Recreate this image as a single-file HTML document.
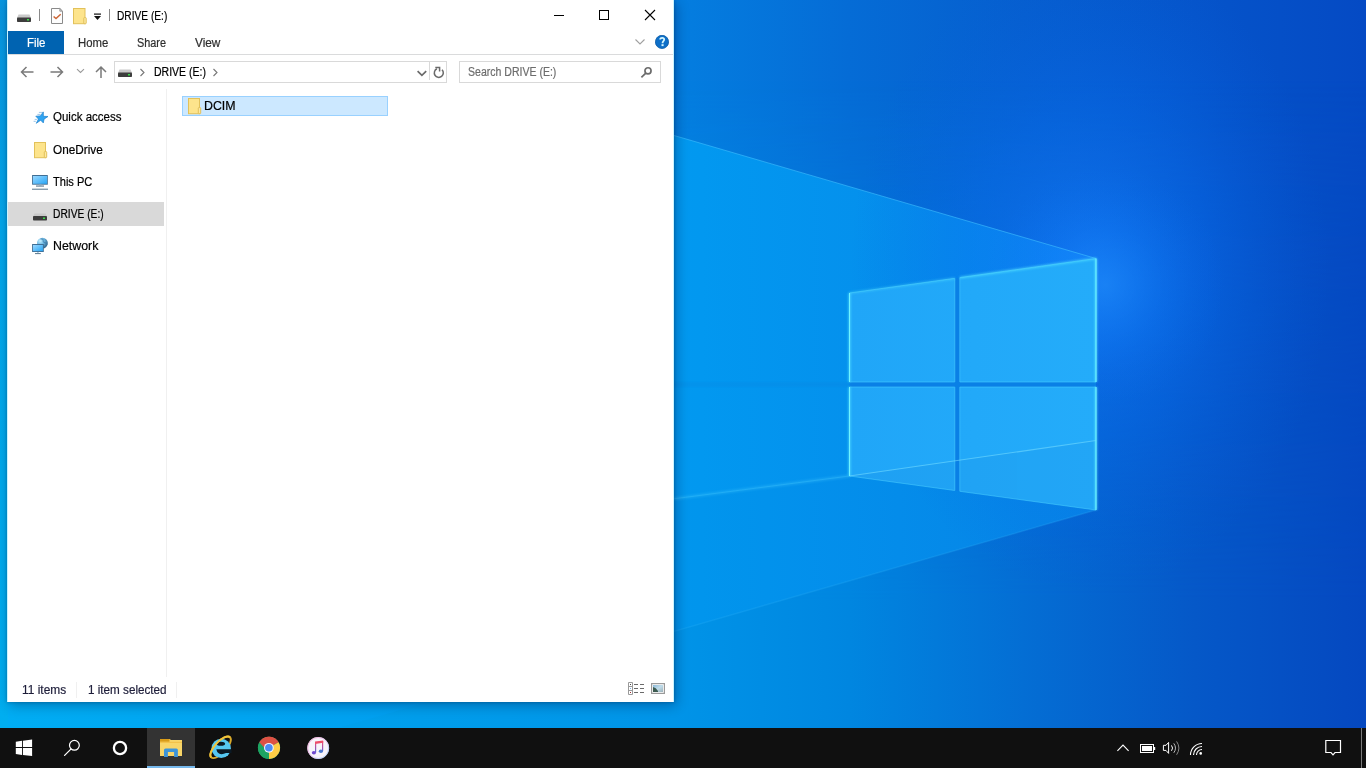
<!DOCTYPE html>
<html><head><meta charset="utf-8">
<style>
html,body{margin:0;padding:0;}
body{width:1366px;height:768px;overflow:hidden;position:relative;font-family:"Liberation Sans",sans-serif;background:#0a6fd8;}
.a{position:absolute;}
.t{position:absolute;font-size:12px;line-height:14px;white-space:pre;transform-origin:0 0;color:#000;-webkit-text-stroke:0.2px currentColor;}
#win{position:absolute;left:7px;top:0;width:667px;height:702px;background:#fff;box-shadow:2px 3px 12px rgba(0,0,40,0.32), 0 0 3px rgba(0,0,40,0.25);}
#tb{position:absolute;left:0;top:728px;width:1366px;height:40px;background:#101010;}
</style></head><body>
<!-- WALLPAPER -->
<svg class="a" style="left:0;top:0" width="1366" height="728" viewBox="0 0 1366 728">
  <defs>
    <linearGradient id="gt" gradientUnits="userSpaceOnUse" x1="0" y1="0" x2="1366" y2="0">
      <stop offset="0" stop-color="#0898e2"/>
      <stop offset="0.493" stop-color="#047ee0"/>
      <stop offset="0.622" stop-color="#056cd6"/>
      <stop offset="0.749" stop-color="#065ece"/>
      <stop offset="0.875" stop-color="#0554ca"/>
      <stop offset="1" stop-color="#054ac4"/>
    </linearGradient>
    <linearGradient id="gbt" gradientUnits="userSpaceOnUse" x1="0" y1="0" x2="1366" y2="0">
      <stop offset="0" stop-color="#00acf0"/>
      <stop offset="0.493" stop-color="#0094e8"/>
      <stop offset="0.622" stop-color="#0086e0"/>
      <stop offset="0.749" stop-color="#046ed4"/>
      <stop offset="0.875" stop-color="#0558c8"/>
      <stop offset="1" stop-color="#0548c0"/>
    </linearGradient>
    <linearGradient id="mv" gradientUnits="userSpaceOnUse" x1="0" y1="80" x2="0" y2="600">
      <stop offset="0" stop-color="#fff" stop-opacity="0"/>
      <stop offset="1" stop-color="#fff" stop-opacity="1"/>
    </linearGradient>
    <mask id="mk"><rect width="1366" height="728" fill="url(#mv)"/></mask>
    <linearGradient id="gb" gradientUnits="userSpaceOnUse" x1="0" y1="0" x2="1096" y2="0">
      <stop offset="0" stop-color="#00b2f6"/>
      <stop offset="0.64" stop-color="#0298f0"/>
      <stop offset="1" stop-color="#0886e8"/>
    </linearGradient>
    <radialGradient id="glow" gradientUnits="userSpaceOnUse" cx="1090" cy="270" r="240" gradientTransform="translate(1090 270) scale(1 1.35) translate(-1090 -270)">
      <stop offset="0" stop-color="#1a80ff" stop-opacity="0.6"/>
      <stop offset="0.5" stop-color="#0a70f4" stop-opacity="0.35"/>
      <stop offset="1" stop-color="#0660e0" stop-opacity="0"/>
    </radialGradient>
    <radialGradient id="glow2" gradientUnits="userSpaceOnUse" cx="1105" cy="285" r="120">
      <stop offset="0" stop-color="#2090ff" stop-opacity="0.55"/>
      <stop offset="0.5" stop-color="#1080ff" stop-opacity="0.22"/>
      <stop offset="1" stop-color="#0a70f0" stop-opacity="0"/>
    </radialGradient>
    <linearGradient id="gp" gradientUnits="userSpaceOnUse" x1="850" y1="0" x2="1096" y2="0">
      <stop offset="0" stop-color="#20a6f8"/>
      <stop offset="1" stop-color="#24acfa"/>
    </linearGradient>
    <filter id="bl" x="-20%" y="-20%" width="140%" height="140%"><feGaussianBlur stdDeviation="1.2"/></filter>
  </defs>
  <rect width="1366" height="728" fill="url(#gt)"/>
  <rect width="1366" height="728" fill="url(#gbt)" mask="url(#mk)"/>
  <polygon points="0,-61 1096,258.5 1096,510 0,825" fill="url(#gb)"/>
  <polygon points="0,586 849.5,476 1096,440 1096,510 0,825" fill="#0060c8" opacity="0.06"/>
  <rect width="1366" height="728" fill="url(#glow)"/>
  <linearGradient id="ls" x1="0" y1="0" x2="0" y2="1"><stop offset="0" stop-color="#0896e0"/><stop offset="0.3" stop-color="#02a6ea"/><stop offset="1" stop-color="#00aef0"/></linearGradient>
  <rect x="0" y="0" width="8" height="728" fill="url(#ls)"/>
  <rect x="900" y="100" width="400" height="400" fill="url(#glow2)"/>
  <line x1="0" y1="-61" x2="1096" y2="258.5" stroke="#40c0ff" stroke-width="1" opacity="0.6"/>
  <line x1="674" y1="498.8" x2="849.5" y2="476" stroke="#40c8ff" stroke-width="1" opacity="0.3"/>
  <line x1="674" y1="631.4" x2="1096" y2="510" stroke="#40c0ff" stroke-width="1.5" opacity="0.18"/>
  <rect x="600" y="382" width="250" height="5" fill="#0a70d0" opacity="0.12" filter="url(#bl)"/>
  <polygon points="849.5,293 1096,258.5 1096,510 849.5,476" fill="#0a80e6"/>
  <line x1="674" y1="498.8" x2="849.5" y2="476" stroke="#50d0ff" stroke-width="3" opacity="0.25" filter="url(#bl)"/>
  <g fill="url(#gp)">
    <polygon points="849.5,293 954.8,278.3 954.8,382 849.5,382"/>
    <polygon points="959.8,277.6 1096,258.5 1096,382 959.8,382"/>
    <polygon points="849.5,387 954.8,387 954.8,490.5 849.5,476"/>
    <polygon points="959.8,387 1096,387 1096,510 959.8,491.3"/>
  </g>
  <g fill="#0a60c0" opacity="0.07">
    <polygon points="849.5,476 954.8,461 954.8,490.5"/>
    <polygon points="959.8,460.3 1096,440.5 1096,510 959.8,491.3"/>
  </g>
  <g fill="none" stroke="#4ad0ff" stroke-width="1" opacity="0.55">
    <polygon points="849.5,293 954.8,278.3 954.8,382 849.5,382"/>
    <polygon points="959.8,277.6 1096,258.5 1096,382 959.8,382"/>
    <polygon points="849.5,387 954.8,387 954.8,490.5 849.5,476"/>
    <polygon points="959.8,387 1096,387 1096,510 959.8,491.3"/>
  </g>
  <g fill="none" stroke="#60f0ff" stroke-width="2.2" filter="url(#bl)" opacity="0.65">
    <polyline points="959.8,277.6 1096,258.5" opacity="0.8"/>
    <polyline points="849.5,293 954.8,278.3" opacity="0.5"/>
    <polyline points="849.5,382 849.5,293"/>
    <polyline points="849.5,476 849.5,387"/>
    <polyline points="1096,382 1096,258.5"/>
    <polyline points="1096,510 1096,387"/>
  </g>
  <g fill="none" stroke="#70f4ff" stroke-width="1">
    <polyline points="849.5,382 849.5,293"/>
    <polyline points="849.5,476 849.5,387"/>
    <polyline points="1096,382 1096,258.5"/>
    <polyline points="1096,510 1096,387"/>
  </g>
  <line x1="849.5" y1="476" x2="1096" y2="440.5" stroke="#7ae0ff" stroke-width="1.2" opacity="0.55"/>
</svg>

<!-- WINDOW -->
<div id="win"></div>
<div class="a" style="left:7px;top:0;width:1px;height:702px;background:#c8f4ff"></div>
<div class="a" style="left:673px;top:0;width:1px;height:702px;background:#c8f4ff"></div>
<!-- title bar icons -->
<svg class="a" style="left:16px;top:12px" width="16" height="12" viewBox="0 0 16 12">
  <path d="M2.5 2.5 L13.5 2.5 L15 6 L1 6 Z" fill="#c9c9c9"/>
  <rect x="1" y="5.5" width="14" height="4.5" rx="0.8" fill="#3d3d3d"/>
  <rect x="11" y="7" width="2" height="1.5" fill="#3ce04a"/>
</svg>
<div class="a" style="left:39px;top:9px;width:1px;height:12px;background:#8a8a8a"></div>
<svg class="a" style="left:50px;top:7px" width="15" height="18" viewBox="0 0 15 18">
  <path d="M1.5 1.5 H9.8 L12.5 4.2 V16.5 H1.5 Z" fill="#fdfdfd" stroke="#8a8a8a" stroke-width="1"/>
  <path d="M9.8 1.5 V4.2 H12.5 Z" fill="#d6d6d6" stroke="#8a8a8a" stroke-width="0.8"/>
  <path d="M3.6 9.5 L6 11.6 L10.7 7.2" fill="none" stroke="#cc6636" stroke-width="1.5"/>
</svg>
<svg class="a" style="left:72px;top:7px" width="16" height="18" viewBox="0 0 16 18">
  <rect x="1.5" y="1.5" width="11.5" height="15.2" fill="#fde48c" stroke="#e2c15a" stroke-width="1"/>
  <rect x="11.8" y="10.6" width="2.4" height="6.1" rx="0.6" fill="#fde9a2" stroke="#e2c15a" stroke-width="1"/>
</svg>
<svg class="a" style="left:93px;top:13px" width="9" height="8" viewBox="0 0 9 8">
  <rect x="1" y="0.5" width="7" height="1.2" fill="#111"/>
  <path d="M1 3 H8 L4.5 7 Z" fill="#111"/>
</svg>
<div class="a" style="left:109px;top:9px;width:1px;height:12px;background:#8a8a8a"></div>
<div class="t" style="left:116.8px;top:8.84px;color:#000;transform:scaleX(0.8473);">DRIVE (E:)</div>
<div class="a" style="left:554px;top:15px;width:10px;height:1px;background:#000"></div>
<div class="a" style="left:599px;top:10px;width:8px;height:8px;border:1px solid #000"></div>
<svg class="a" style="left:644px;top:9px" width="12" height="12" viewBox="0 0 12 12">
  <path d="M1 1 L11 11 M11 1 L1 11" stroke="#000" stroke-width="1.1"/>
</svg>
<!-- ribbon -->
<div class="a" style="left:8px;top:31px;width:56px;height:23px;background:#0063b1"></div>
<div class="a" style="left:8px;top:54px;width:665px;height:1px;background:#dadbdc"></div>
<svg class="a" style="left:634px;top:38px" width="12" height="8" viewBox="0 0 12 8">
  <path d="M1.5 1.5 L6 6 L10.5 1.5" fill="none" stroke="#a0a0a0" stroke-width="1.1"/>
</svg>
<svg class="a" style="left:655px;top:35px" width="14" height="14" viewBox="0 0 14 14">
  <circle cx="7" cy="6.9" r="6.6" fill="#0e6fc8" stroke="#0a5aa6" stroke-width="0.8"/>
  <path d="M5.2 4.5 C5.2 3.3 6.1 2.8 7.2 2.8 C8.4 2.8 9.2 3.5 9.2 4.6 C9.2 6 7.6 6.3 7.6 7.8 V8.3" fill="none" stroke="#d4f6ff" stroke-width="1.8"/>
  <rect x="6.5" y="9.2" width="2.1" height="1.9" fill="#d4f6ff"/>
</svg>
<div class="t" style="left:27.2px;top:35.84px;color:#fff;transform:scaleX(0.9565);">File</div>
<div class="t" style="left:78.2px;top:35.84px;color:#2e2e2e;transform:scaleX(0.9452);">Home</div>
<div class="t" style="left:137.4px;top:35.84px;color:#2e2e2e;transform:scaleX(0.9065);">Share</div>
<div class="t" style="left:195.4px;top:35.84px;color:#2e2e2e;transform:scaleX(0.9840);">View</div>
<svg class="a" style="left:19px;top:65px" width="16" height="14" viewBox="0 0 16 14">
  <path d="M14.5 7 H2.5 M7.5 2 L2.5 7 L7.5 12" fill="none" stroke="#7a7a7a" stroke-width="1.5"/>
</svg>
<svg class="a" style="left:49px;top:65px" width="16" height="14" viewBox="0 0 16 14">
  <path d="M1.5 7 H13.5 M8.5 2 L13.5 7 L8.5 12" fill="none" stroke="#7a7a7a" stroke-width="1.5"/>
</svg>
<svg class="a" style="left:76px;top:68px" width="9" height="6" viewBox="0 0 9 6">
  <path d="M1 1.2 L4.5 4.5 L8 1.2" fill="none" stroke="#9a9a9a" stroke-width="1.1"/>
</svg>
<svg class="a" style="left:94px;top:65px" width="14" height="14" viewBox="0 0 14 14">
  <path d="M7 13 V2 M2 7 L7 2 L12 7" fill="none" stroke="#7a7a7a" stroke-width="1.5"/>
</svg>
<div class="a" style="left:114px;top:61px;width:331px;height:20px;border:1px solid #d9d9d9"></div>
<div class="a" style="left:429px;top:62px;width:1px;height:18px;background:#d9d9d9"></div>
<svg class="a" style="left:117px;top:67px" width="16" height="12" viewBox="0 0 16 12">
  <path d="M2.5 2.5 L13.5 2.5 L15 6 L1 6 Z" fill="#c9c9c9"/>
  <rect x="1" y="5.5" width="14" height="4.5" rx="0.8" fill="#3d3d3d"/>
  <rect x="11" y="7" width="2" height="1.5" fill="#3ce04a"/>
</svg>
<svg class="a" style="left:139px;top:68px" width="7" height="9" viewBox="0 0 7 9">
  <path d="M1.5 1 L5 4.5 L1.5 8" fill="none" stroke="#777" stroke-width="1.1"/>
</svg>
<svg class="a" style="left:212px;top:68px" width="7" height="9" viewBox="0 0 7 9">
  <path d="M1.5 1 L5 4.5 L1.5 8" fill="none" stroke="#777" stroke-width="1.1"/>
</svg>
<svg class="a" style="left:416px;top:68px" width="12" height="10" viewBox="0 0 12 10">
  <path d="M1.6 3.2 L5.9 7.4 L10.2 3.2" fill="none" stroke="#6a6a6a" stroke-width="1.7"/>
</svg>
<svg class="a" style="left:432px;top:65px" width="14" height="14" viewBox="0 0 14 14">
  <path d="M10.0 4.7 A4.5 4.5 0 1 1 4.9 3.8" fill="none" stroke="#6a6a6a" stroke-width="1.5"/>
  <path d="M3.3 2.6 H7.6 V6.6" fill="none" stroke="#6a6a6a" stroke-width="1.5"/>
</svg>
<div class="a" style="left:459px;top:61px;width:200px;height:20px;border:1px solid #d9d9d9"></div>
<svg class="a" style="left:639px;top:66px" width="14" height="14" viewBox="0 0 14 14">
  <circle cx="9" cy="4.8" r="3.05" fill="none" stroke="#6c6c6c" stroke-width="1.7"/>
  <path d="M6.8 7.1 L2.4 11.4" stroke="#6c6c6c" stroke-width="1.7"/>
</svg>
<div class="t" style="left:153.6px;top:64.84px;color:#000;transform:scaleX(0.8750);">DRIVE (E:)</div>
<div class="t" style="left:467.6px;top:64.84px;color:#6d6d6d;transform:scaleX(0.8776);">Search DRIVE (E:)</div>
<div class="a" style="left:166px;top:89px;width:1px;height:588px;background:#f0f0f0"></div>
<div class="a" style="left:8px;top:202px;width:156px;height:24px;background:#d9d9d9"></div>
<svg class="a" style="left:32px;top:110px" width="18" height="16" viewBox="0 0 18 16">
  <path d="M11.30 1.90 L11.37 6.30 L16.00 6.50 L12.05 9.13 L11.30 12.90 L8.70 10.22 L4.30 13.30 L6.44 9.03 L3.80 6.20 L8.35 5.90 Z" fill="#2ea4f2" stroke="#1e80cc" stroke-width="0.7" stroke-linejoin="round"/>
  <path d="M6.9 2.4 H11 M5.4 4.4 H8.5 M2.7 9.4 H4.9 M1.6 11.3 H3.8" stroke="#4a98d8" stroke-width="0.8" opacity="0.7"/>
</svg>
<svg class="a" style="left:33px;top:141px" width="15" height="18" viewBox="0 0 15 18">
  <rect x="1.5" y="1.5" width="11" height="15.2" fill="#fde48c" stroke="#e2c15a" stroke-width="1"/>
  <rect x="11.3" y="10.6" width="2.4" height="6.1" rx="0.6" fill="#fde9a2" stroke="#e2c15a" stroke-width="1"/>
</svg>
<svg class="a" style="left:31px;top:174px" width="18" height="17" viewBox="0 0 18 17">
  <defs><linearGradient id="scr" x1="0" y1="0" x2="1" y2="1"><stop offset="0" stop-color="#9ad8ff"/><stop offset="1" stop-color="#28a6f6"/></linearGradient></defs>
  <rect x="1.1" y="1" width="15.7" height="9.7" fill="#3f6e94"/>
  <rect x="2" y="2" width="14" height="7.8" fill="url(#scr)"/>
  <rect x="8.3" y="10.7" width="2.2" height="0.9" fill="#a8c6dc"/>
  <rect x="5" y="11.5" width="8" height="1.1" fill="#5a788e"/>
  <rect x="1" y="14" width="16" height="0.8" fill="#d6e0e8"/>
  <rect x="1" y="14.8" width="16" height="1.1" fill="#7d94a6"/>
</svg>
<svg class="a" style="left:32px;top:212px" width="16" height="10" viewBox="0 0 16 10">
  <path d="M2.5 1.5 L13.5 1.5 L15 4.5 L1 4.5 Z" fill="#c9c9c9"/>
  <rect x="1" y="4" width="14" height="4.5" rx="0.8" fill="#3d3d3d"/>
  <rect x="11" y="5.5" width="2" height="1.5" fill="#3ce04a"/>
</svg>
<svg class="a" style="left:31px;top:236px" width="18" height="19" viewBox="0 0 18 19">
  <defs>
    <radialGradient id="glb" cx="0.3" cy="0.3" r="0.8"><stop offset="0" stop-color="#c8f0ff"/><stop offset="0.45" stop-color="#6cb8e4"/><stop offset="1" stop-color="#2a5a80"/></radialGradient>
  </defs>
  <circle cx="11.4" cy="7.1" r="5.4" fill="url(#glb)"/>
  <path d="M9.5 3 Q11.5 2.6 12.3 4 Q11.6 5.6 13.5 6.4 Q15.6 6.8 16.2 9" fill="none" stroke="#3d7aa8" stroke-width="1.1" opacity="0.7"/>
  <rect x="1.1" y="8" width="11.7" height="8" fill="#3f6e94"/>
  <rect x="2" y="9" width="9.9" height="6.1" fill="url(#scr)"/>
  <rect x="6" y="16" width="1.8" height="0.9" fill="#a8c6dc"/>
  <rect x="4" y="17.1" width="5.8" height="1" fill="#5a788e"/>
</svg>
<div class="t" style="left:53.3px;top:110.34px;color:#000;transform:scaleX(0.9602);">Quick access</div>
<div class="t" style="left:53.3px;top:143.2px;color:#000;transform:scaleX(0.9799);">OneDrive</div>
<div class="t" style="left:53.3px;top:174.84px;color:#000;transform:scaleX(0.9209);">This PC</div>
<div class="t" style="left:53.3px;top:206.84px;color:#000;transform:scaleX(0.8542);">DRIVE (E:)</div>
<div class="t" style="left:53.0px;top:239.04px;color:#000;transform:scaleX(1.0300);">Network</div>
<div class="a" style="left:182px;top:96px;width:204px;height:18px;background:#cce8ff;border:1px solid #99d1ff"></div>
<svg class="a" style="left:187px;top:97px" width="15" height="18" viewBox="0 0 15 18">
  <rect x="1.5" y="1.5" width="11" height="15.2" fill="#fde48c" stroke="#e2c15a" stroke-width="1"/>
  <rect x="11.3" y="10.6" width="2.4" height="6.1" rx="0.6" fill="#fde9a2" stroke="#e2c15a" stroke-width="1"/>
</svg>
<div class="t" style="left:203.6px;top:98.84px;color:#000;transform:scaleX(1.0300);">DCIM</div>
<div class="t" style="left:21.8px;top:682.84px;color:#1e1e3a;transform:scaleX(0.9931);">11 items</div>
<div class="t" style="left:87.8px;top:682.84px;color:#1e1e3a;transform:scaleX(0.9737);">1 item selected</div>
<div class="a" style="left:76px;top:682px;width:1px;height:16px;background:#f0f0f0"></div>
<div class="a" style="left:176px;top:682px;width:1px;height:16px;background:#f0f0f0"></div>
<svg class="a" style="left:628px;top:682px" width="17" height="14" viewBox="0 0 17 14">
  <path d="M0.5 0.5 H4.5 V12.5 H0.5 Z M0.5 4.5 H4.5 M0.5 8.5 H4.5" fill="#fff" stroke="#9a9a9a" stroke-width="1"/>
  <rect x="2" y="2" width="1" height="1" fill="#444"/>
  <rect x="2" y="6" width="1" height="1" fill="#7aaee0"/>
  <rect x="2" y="10" width="1" height="1" fill="#a03030"/>
  <path d="M6 2.5 H10 M12 2.5 H16 M6 6.5 H10 M12 6.5 H16 M6 10.5 H10 M12 10.5 H16" stroke="#6a6a6a" stroke-width="1.1"/>
</svg>
<svg class="a" style="left:651px;top:683px" width="14" height="11" viewBox="0 0 14 11">
  <defs><linearGradient id="ph" x1="0" y1="0" x2="1" y2="1"><stop offset="0" stop-color="#8ab8d8"/><stop offset="0.5" stop-color="#c0dcea"/><stop offset="1" stop-color="#9ab0b8"/></linearGradient></defs>
  <rect x="0.6" y="0.6" width="12.8" height="9.8" fill="#fff" stroke="#9a9a9a" stroke-width="1.2"/>
  <rect x="2" y="2" width="10" height="7" fill="url(#ph)"/>
  <path d="M2 4 Q5 4.5 7 8 L7 9 H2 Z" fill="#3c5a50"/>
</svg>
<!-- TASKBAR -->
<div id="tb"></div>
<svg class="a" style="left:0;top:728px" width="1366" height="40" viewBox="0 728 1366 40">
  <!-- start -->
  <g fill="#fff">
    <polygon points="15.8,741.7 22,740.8 22,746.9 15.8,746.9"/>
    <polygon points="22.9,740.7 32.1,739.6 32.1,746.9 22.9,746.9"/>
    <polygon points="15.8,748 22,748 22,755 15.8,754.1"/>
    <polygon points="22.9,748 32.1,748 32.1,756.1 22.9,755.1"/>
  </g>
  <!-- search -->
  <circle cx="74.4" cy="745.3" r="4.9" fill="none" stroke="#fff" stroke-width="1.2"/>
  <path d="M70.9 749.1 L64.6 755.4" stroke="#fff" stroke-width="1.3" stroke-linecap="round"/>
  <!-- cortana -->
  <circle cx="120" cy="748" r="6.1" fill="none" stroke="#fff" stroke-width="2.3"/>
  <!-- explorer active -->
  <rect x="147" y="728" width="48" height="40" fill="#333"/>
  <rect x="147" y="766" width="48" height="2" fill="#76b9ed"/>
  <path d="M160 739 H169.5 L171 740 H182 V756 H160 Z" fill="#f8d568"/>
  <rect x="160" y="739" width="9.5" height="2.8" fill="#d99c18"/>
  <rect x="160" y="741.8" width="22" height="1.2" fill="#f3c24a"/>
  <path d="M164 757 V750 Q164 748.4 165.6 748.4 H176.3 Q177.9 748.4 177.9 750 V757 H174.1 V751.9 H167.9 V757 Z" fill="#3d94d8"/>
  <!-- IE -->
  <g transform="rotate(-47 220.6 747.3)"><ellipse cx="220.6" cy="747.3" rx="13.8" ry="5.6" fill="none" stroke="#d9a92a" stroke-width="1.9"/></g>
  <circle cx="221.2" cy="748.4" r="9.7" fill="#56c8f2"/>
  <ellipse cx="220.8" cy="743.8" rx="4.3" ry="2" fill="#0b1a26"/>
  <path d="M216.3 749.3 H231.5 V753.1 H226 Q222 755 219 753.6 Q216.8 752.4 216.3 749.3 Z" fill="#0b1a26"/>
  <g transform="rotate(-47 220.6 747.3)"><path d="M206.8 747.3 A13.8 5.6 0 0 1 234.4 747.3" fill="none" stroke="#f0c43a" stroke-width="1.9"/></g>
  <!-- chrome -->
  <circle cx="269" cy="747.8" r="11.1" fill="#1da462"/>
  <path d="M269 747.8 L259.4 742.25 A11.1 11.1 0 0 1 278.6 742.25 Z" fill="#dd5144"/>
  <path d="M269 747.8 L278.6 742.25 A11.1 11.1 0 0 1 269 758.9 Z" fill="#ffcd46"/>
  <path d="M269 747.8 L269 758.9 A11.1 11.1 0 0 1 259.4 742.25 Z" fill="#1da462"/>
  <path d="M264.2 747.8 L259.4 742.25 A11.1 11.1 0 0 1 278.6 742.25 L269 742.25 Z" fill="#dd5144"/>
  <circle cx="268.9" cy="747.8" r="4.9" fill="#f0f4ff"/>
  <circle cx="268.9" cy="747.8" r="3.8" fill="#4c8bf5"/>
  <!-- itunes -->
  <defs>
    <linearGradient id="itn" x1="0" y1="0" x2="0" y2="1"><stop offset="0" stop-color="#f2506a"/><stop offset="0.6" stop-color="#a050b0"/><stop offset="1" stop-color="#4a70d8"/></linearGradient>
    <linearGradient id="itr" x1="0" y1="0" x2="1" y2="1"><stop offset="0" stop-color="#f0a0c8"/><stop offset="0.5" stop-color="#e8b8f0"/><stop offset="1" stop-color="#90d8ff"/></linearGradient>
  </defs>
  <circle cx="318.2" cy="748" r="10.9" fill="#f7f3fb"/>
  <circle cx="318.2" cy="748" r="10.5" fill="none" stroke="url(#itr)" stroke-width="0.9"/>
  <path d="M315.6 752.6 V742.5 M322.6 751 V741" fill="none" stroke="url(#itn)" stroke-width="1.2"/>
  <path d="M315 741.6 L323.2 740.4 V742.7 L315 743.9 Z" fill="#ee4e6c"/>
  <ellipse cx="313.9" cy="752.8" rx="2.1" ry="1.7" fill="#7048d0"/>
  <ellipse cx="320.9" cy="751.2" rx="2.1" ry="1.7" fill="#4a78d0"/>
  <!-- tray -->
  <path d="M1117.4 750.8 L1123 745 L1128.6 750.8" fill="none" stroke="#fff" stroke-width="1.1"/>
  <rect x="1140.5" y="744.5" width="13" height="8" fill="none" stroke="#fff" stroke-width="1"/>
  <rect x="1142" y="746" width="10" height="5" fill="#fff"/>
  <rect x="1154" y="747" width="1.2" height="3" fill="#fff"/>
  <path d="M1163.4 745.3 H1166 L1168.6 742.4 V753.4 L1166 750.4 H1163.4 Z" fill="none" stroke="#fff" stroke-width="1" stroke-linejoin="round"/>
  <path d="M1171.5 745.4 Q1173.6 748.1 1171.5 750.8" fill="none" stroke="#fff" stroke-width="1"/>
  <path d="M1173.8 743.4 Q1177.2 748.1 1173.8 752.8" fill="none" stroke="#bbb" stroke-width="1"/>
  <path d="M1176.6 741.4 Q1181.2 748.1 1176.6 754.8" fill="none" stroke="#888" stroke-width="1"/>
  <circle cx="1200.7" cy="753.4" r="1.3" fill="#fff"/>
  <path d="M1190.5 755 A11.5 11.5 0 0 1 1202 743.5" fill="none" stroke="#fff" stroke-width="1.1"/>
  <path d="M1193.5 755 A8.5 8.5 0 0 1 1202 746.5" fill="none" stroke="#fff" stroke-width="1.1"/>
  <path d="M1196.5 755 A5.5 5.5 0 0 1 1202 749.5" fill="none" stroke="#fff" stroke-width="1.1"/>
  <!-- action center -->
  <path d="M1325.8 740.5 H1340.5 V752.5 H1335 L1333 754.8 L1331 752.5 H1325.8 Z" fill="none" stroke="#fff" stroke-width="1.2"/>
  <rect x="1361" y="728" width="1" height="40" fill="#7a7a7a"/>
</svg>
</body></html>
